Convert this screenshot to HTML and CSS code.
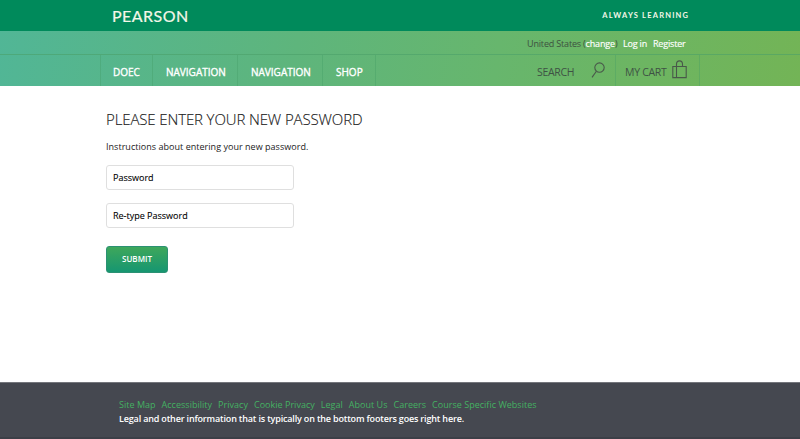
FILE: index.html
```html
<!DOCTYPE html>
<html lang="en">
<head>
<meta charset="utf-8">
<title>New password</title>
<link rel="stylesheet" href="styles.css">
</head>
<body>
<header>
  <div class="brandbar">
    <div class="wrap brand">
      <span class="logo">PEARSON</span>
      <span class="tagline">ALWAYS LEARNING</span>
    </div>
  </div>
  <div class="band">
    <div class="utility">
      <div class="wrap links">
        <span class="region">United States (<a>change</a>)</span>
        <a class="login">Log in</a>
        <a class="register">Register</a>
      </div>
    </div>
    <div class="wrap menu">
      <nav>
        <a class="n1">DOEC</a><a class="n2">NAVIGATION</a><a class="n3">NAVIGATION</a><a class="n4">SHOP</a>
      </nav>
      <div class="search"><span>SEARCH</span>
        <svg width="16" height="18" viewBox="0 0 16 18"><circle cx="8.5" cy="6.6" r="4.7"/><path d="M5.4 10.2L1 16.4"/></svg>
      </div>
      <div class="cart"><span>MY CART</span>
        <svg width="15" height="19" viewBox="0 0 15 19"><path d="M.8 6.5H14.2V17.6H.8ZM4.5 17.6V4.2C4.5-.3 10.5-.3 10.5 4.2V6.5"/></svg>
      </div>
    </div>
  </div>
</header>
<main>
  <h1>PLEASE ENTER YOUR NEW PASSWORD</h1>
  <p class="intro">Instructions about entering your new password.</p>
  <div class="field"><span class="f1">Password</span></div>
  <div class="field"><span class="f2">Re-type Password</span></div>
  <button type="button">SUBMIT</button>
</main>
<footer>
  <div class="footlinks"><a>Site Map</a><a>Accessibility</a><a>Privacy</a><a>Cookie Privacy</a><a>Legal</a><a>About Us</a><a>Careers</a><a>Course Specific Websites</a></div>
  <p class="legal">Legal and other information that is typically on the bottom footers goes right here.</p>
</footer>
</body>
</html>
```
FILE: styles.css
```css
* { box-sizing: border-box; }
body {
  margin: 0;
  height: 439px;
  display: flex;
  flex-direction: column;
  font: 9px/12px "Open Sans", sans-serif;
  color: #222;
  background: #fff;
  white-space: nowrap;
  overflow: hidden;
}
.wrap { width: 600px; margin: 0 auto; display: flex; }
.brandbar { height: 31px; background: #008a5b; color: #f4f7e9; }
.brand { height: 31px; align-items: center; justify-content: space-between; padding: 0 12px 0 12px; font-family: Lato, sans-serif; }
.logo { font-size: 16px; line-height: 20px; letter-spacing: .45px; -webkit-text-stroke: .2px #f4f7e9; }
.tagline { font-size: 7.5px; font-weight: 700; letter-spacing: 1.2px; margin-right: -1.2px; }
.band { height: 55px; background: linear-gradient(100deg, #51b696 0%, #5eb57c 37%, #67b66d 62%, #73b456 100%); }
.utility { height: 24px; border-bottom: 1px solid rgba(75, 160, 105, .6); }
.links { height: 23px; align-items: center; padding: 2px 0 0 427px; color: #3d5140; letter-spacing: -.17px; }
.links a { color: #fff; -webkit-text-stroke: .15px #fff; }
.login { margin-left: 5.5px; }
.register { margin-left: 6px; }
.menu { height: 31px; border: solid rgba(65, 155, 100, .35); border-width: 0 1px; }
nav { display: flex; width: 275px; }
nav a { border-right: 1px solid rgba(65, 155, 100, .35); padding: 10px 0 0 13px; color: #fff; font-size: 10px; line-height: 14px; -webkit-text-stroke: .35px #fff; }
.n1 { width: 52px; padding-left: 12px; }
.n2, .n3 { width: 85px; }
.n4 { width: 53px; }
.search, .cart { display: flex; color: #3f5245; font-size: 10.5px; line-height: 14px; letter-spacing: -.3px; }
.search span, .cart span { margin-top: 10px; }
.search span { width: 39px; }
.search { width: 240px; padding-left: 161px; border-right: 1px solid rgba(65, 155, 100, .35); }
.search svg { margin: 6px 0 0 15px; }
.cart { padding-left: 9px; }
.cart span { width: 41px; }
.cart svg { margin: 5px 0 0 6px; }
svg { fill: none; stroke: #49584a; stroke-width: 1.1; flex: none; }
main { flex: 1; padding: 23px 0 0 106px; }
h1 { margin: 0; font-size: 15px; line-height: 20px; font-weight: 300; letter-spacing: -.12px; -webkit-text-stroke: .15px #222; }
.intro { margin: 12px 0 12px; line-height: 12px; letter-spacing: .03px; }
.field { width: 188px; height: 25px; margin-bottom: 12.5px; padding: 6px 6px 0; border: 1px solid #dfdfdf; border-radius: 3px; color: #000; -webkit-text-stroke: .1px #000; }
button { display: block; margin-top: 18px; width: 62px; height: 27px; padding: 0; border: 1px solid #2b9173; border-radius: 3px; background: linear-gradient(#3ea75b, #169671); color: #fff; font: 600 8px/12px "Open Sans", sans-serif; }
footer { height: 57px; background: #454850; border-top: 1px solid #74767c; border-bottom: 2px solid #3c3f47; padding: 15px 0 0 119px; }
.footlinks { display: flex; gap: 6px; color: #44b162; line-height: 13px; letter-spacing: .02px; }
.legal { margin: 1px 0 0; color: #fff; line-height: 13px; font-weight: 600; letter-spacing: -.165px; }
```
